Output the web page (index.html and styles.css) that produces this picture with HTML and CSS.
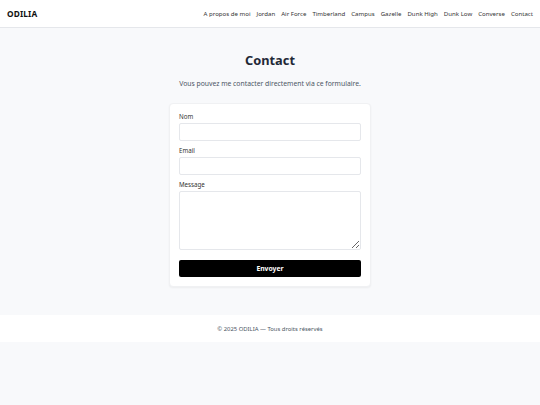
FILE: index.html
```html
<!DOCTYPE html>
<html lang="fr">
<head>
<meta charset="utf-8">
<title>Contact — ODILIA</title>
<link rel="stylesheet" href="styles.css">
</head>
<body>
<header class="site-header">
  <div class="logo">ODILIA</div>
  <nav class="nav">
    <a href="#">A propos de moi</a>
    <a href="#">Jordan</a>
    <a href="#">Air Force</a>
    <a href="#">Timberland</a>
    <a href="#">Campus</a>
    <a href="#">Gazelle</a>
    <a href="#">Dunk High</a>
    <a href="#">Dunk Low</a>
    <a href="#">Converse</a>
    <a href="#">Contact</a>
  </nav>
</header>
<main class="main">
  <h1 class="title">Contact</h1>
  <p class="subtitle">Vous pouvez me contacter directement via ce formulaire.</p>
  <form class="card">
    <div class="field">
      <label class="label">Nom</label>
      <input class="input" type="text">
    </div>
    <div class="field">
      <label class="label">Email</label>
      <input class="input" type="email">
    </div>
    <div class="field">
      <label class="label">Message</label>
      <textarea class="input textarea"></textarea>
    </div>
    <button class="button" type="button">Envoyer</button>
  </form>
</main>
<footer class="footer">© 2025 ODILIA — Tous droits réservés</footer>
</body>
</html>
```
FILE: styles.css
```css
* { box-sizing: border-box; }
html, body { margin: 0; padding: 0; }
body {
  background: #f8f9fb;
  font-family: "Noto Sans", "DejaVu Sans", sans-serif;
  color: #111827;
}
.site-header {
  height: 28px;
  background: #fff;
  border-bottom: 1px solid #e5e7eb;
  display: flex;
  align-items: center;
  justify-content: space-between;
  padding: 0 7px;
}
.logo {
  font-weight: 700;
  font-size: 8.3px;
  letter-spacing: 0.15px;
  color: #111;
}
.nav {
  display: flex;
  gap: 6px;
}
.nav a {
  font-size: 6.1px;
  color: #333;
  text-decoration: none;
}
.main {
  padding-top: 24px;
  display: flex;
  flex-direction: column;
  align-items: center;
}
.title {
  margin: 0;
  font-size: 12.8px;
  line-height: 17px;
  font-weight: 700;
  color: #1f2937;
}
.subtitle {
  margin: 10px 0 0;
  font-size: 6.8px;
  line-height: 10px;
  color: #4b5563;
}
.card {
  margin-top: 14px;
  width: 202px;
  background: #fff;
  border-radius: 4px;
  box-shadow: 0 1px 2px rgba(0,0,0,0.05);
  border: 1px solid #f0f1f3;
  padding: 9px 9px 9px;
  display: flex;
  flex-direction: column;
}
.field {
  display: flex;
  flex-direction: column;
  margin-bottom: 6px;
}
.label {
  font-size: 6.2px;
  line-height: 8px;
  margin-bottom: 2px;
  color: #333;
}
.input {
  height: 18px;
  border: 1px solid #e5e7eb;
  border-radius: 2px;
  background: #fff;
  font: inherit;
  font-size: 7px;
  padding: 2px 4px;
}
.textarea {
  height: 59px;
  resize: vertical;
}
.button {
  margin-top: 4px;
  height: 17px;
  background: #000;
  color: #fff;
  border: none;
  border-radius: 2px;
  font-family: inherit;
  font-weight: 700;
  font-size: 6.8px;
  padding: 0;
}
.footer {
  margin-top: 28px;
  height: 27px;
  background: #fff;
  display: flex;
  align-items: center;
  justify-content: center;
  font-size: 5.9px;
  color: #4b5563;
}
```
